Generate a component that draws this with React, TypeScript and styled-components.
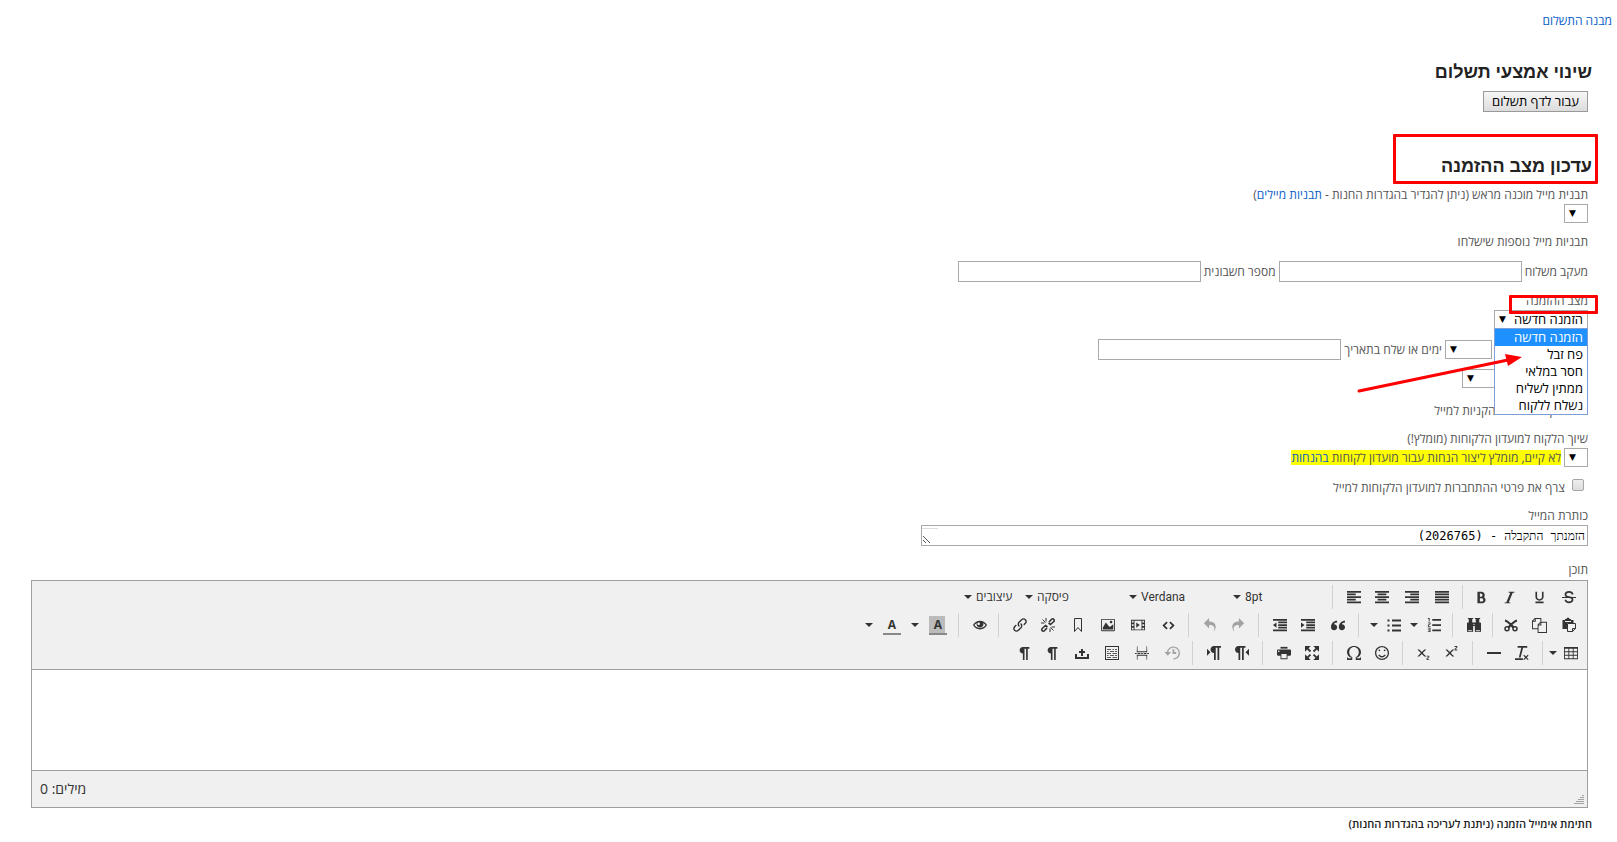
import React from 'react';
import styled, { createGlobalStyle } from 'styled-components';
import {
  ImParagraphLeft, ImParagraphCenter, ImParagraphRight, ImParagraphJustify, ImIndentIncrease, ImIndentDecrease,
  ImBold, ImUnderline, ImItalic, ImStrikethrough, ImOmega, ImPageBreak, ImSuperscript, ImSubscript, ImPilcrow,
  ImLtr, ImRtl, ImQuotesLeft, ImLink, ImImage, ImFilm, ImUndo2, ImRedo2, ImBinoculars, ImCopy, ImPrinter,
  ImSmile, ImEye, ImClearFormatting, ImTable2, ImListNumbered, ImHistory, ImEnlarge, ImEmbed,
} from 'react-icons/im';

const sans = '"Open Sans", "Liberation Sans", sans-serif';

const GlobalStyle = createGlobalStyle`
  body { margin: 0; background: #fff; }
  *, *::before, *::after { box-sizing: border-box; }
`;

const Page = styled.main`
  direction: rtl;
  padding: 13px 0 10px;
  font: 12px/16px ${sans};
  color: #555;
`;

const Link = styled.a`
  color: #0b5ec9;
  text-decoration: none;
`;

const Crumbs = styled.nav`
  padding: 0 5px;
`;

const Section = styled.section`
  padding: 0 25px 0 31px;
`;

const TitleBox = styled.div<{ $gap: number }>`
  position: relative;
  width: max-content;
  margin-top: ${p => p.$gap}px;
`;

const Title = styled.h2`
  margin: 0;
  font: 700 18px/24px "Liberation Sans", sans-serif;
  color: #222;
`;

const Mark = styled.span<{ $top: number; $right: number; $width: number; $height: number }>`
  position: absolute;
  z-index: 2;
  top: ${p => p.$top}px;
  right: ${p => p.$right}px;
  width: ${p => p.$width}px;
  height: ${p => p.$height}px;
  border: 3px solid #f00;
  border-radius: 1px;
  pointer-events: none;
`;

const Body = styled.div`
  padding-right: 4px;
`;

const PayButton = styled.button`
  display: block;
  height: 21px;
  margin-top: 7px;
  padding: 0 8px;
  border: 1px solid #999;
  border-radius: 0;
  background: linear-gradient(#f6f6f6, #dcdcdc);
  font: 13px/17px ${sans};
  color: #000;
`;

const Stack = styled.div<{ $gap: number; $top: number }>`
  display: flex;
  flex-direction: column;
  gap: ${p => p.$gap}px;
  padding-top: ${p => p.$top}px;
`;

const Field = styled.div`
  display: flex;
  flex-direction: column;
  align-items: flex-start;
  gap: 1px;
  position: relative;
`;

const Row = styled.div<{ $inset?: number }>`
  display: flex;
  align-items: center;
  gap: 3px;
  padding-right: ${p => p.$inset ?? 0}px;
`;

const TickRow = styled(Row)`
  height: 17px;
`;

const TextBox = styled.input`
  width: 243px;
  height: 21px;
  padding: 1px 3px;
  border: 1px solid #a9a9a9;
  background: #fff;
`;

const SelectShell = styled.span<{ $width: number }>`
  position: relative;
  display: inline-block;
  width: ${p => p.$width}px;
  height: 19px;
  &::after {
    content: '▼';
    position: absolute;
    left: 5px;
    top: 1px;
    font: 9px/17px "DejaVu Sans", sans-serif;
    color: #000;
    pointer-events: none;
  }
`;

const NativeSelect = styled.select`
  appearance: none;
  display: block;
  width: 100%;
  height: 100%;
  padding: 0 4px;
  border: 1px solid #a9a9a9;
  border-radius: 0;
  background: #fff;
  font: 13px/17px ${sans};
  color: #000;
`;

const Menu = styled.ul`
  position: absolute;
  z-index: 1;
  top: 100%;
  right: 0;
  width: 94px;
  margin: -1px 0 0;
  padding: 0;
  list-style: none;
  border: 1px solid #7b9fd6;
  background: #fff;
`;

const MenuItem = styled.li<{ $active?: boolean }>`
  height: 17px;
  padding: 0 4px;
  font: 13px/16px ${sans};
  white-space: nowrap;
  color: ${p => (p.$active ? '#fff' : '#000')};
  background: ${p => (p.$active ? '#1e90ff' : 'transparent')};
`;

const Pointer = styled.svg`
  position: absolute;
  z-index: 2;
  top: 59px;
  right: 60px;
  pointer-events: none;
`;

const Tick = styled.input`
  appearance: none;
  width: 12px;
  height: 12px;
  margin: 0 4px 5px;
  border: 1px solid #a6a6a6;
  border-radius: 2px;
  background: linear-gradient(#eee, #dcdcdc);
`;

const Notice = styled.span`
  line-height: 15px;
  background: #ff0;
`;

const SubjectShell = styled.span`
  position: relative;
  display: block;
  width: 667px;
  max-width: 100%;
  height: 21px;
`;

const Subject = styled.textarea`
  display: block;
  width: 100%;
  height: 100%;
  padding: 2px;
  border: 1px solid #a9a9a9;
  resize: none;
  overflow: hidden;
  font: 12px/16px "DejaVu Sans Mono", "Liberation Serif", monospace;
  color: #000;
`;

const SubjectGrip = styled.svg`
  position: absolute;
  left: 1px;
  top: 1px;
`;

const Content = styled.div`
  margin-top: 4px;
`;

const Editor = styled.div`
  margin-top: 2px;
  border: 1px solid #9e9e9e;
`;

const Toolbar = styled.div`
  padding: 2px 0;
  border-bottom: 1px solid #9e9e9e;
  background: #f0f0f0;
  color: #333;
`;

const ToolRow = styled.div`
  display: flex;
  height: 28px;
  align-items: center;
`;

const ToolGroup = styled.div<{ $bare?: boolean }>`
  display: flex;
  align-items: center;
  height: 24px;
  padding: 0 5px 0 8px;
  border-left: 1px solid ${p => (p.$bare ? 'transparent' : '#d2d2d2')};
  &:first-child { padding: 0 3px 0 5px; }
`;

const Tool = styled.button<{ $width?: number; $faded?: boolean }>`
  display: flex;
  align-items: center;
  justify-content: center;
  width: ${p => p.$width ?? 30}px;
  height: 24px;
  padding: 0;
  border: 0;
  background: none;
  color: inherit;
  font-size: 14px;
  opacity: ${p => (p.$faded ? 0.4 : 1)};
  &:last-child:not(:only-child) { width: ${p => p.$width ?? 26}px; }
`;

const Caret = styled.span`
  width: 0;
  height: 0;
  border: 4px solid transparent;
  border-top-color: #333;
  border-bottom: 0;
`;

const ListTool = styled.button<{ $width: number }>`
  display: flex;
  direction: ltr;
  align-items: center;
  gap: 4px;
  width: ${p => p.$width}px;
  height: 24px;
  padding: 0 4px;
  border: 0;
  background: none;
  font: 12px/16px Roboto, "Open Sans", sans-serif;
  color: #333;
`;

const Swatch = styled.span<{ $filled?: boolean }>`
  width: 18px;
  height: 19px;
  border-bottom: 2px solid #888;
  font: 700 12px/17px ${sans};
  text-align: center;
  background: linear-gradient(to right, ${p => (p.$filled ? '#bbb' : 'transparent')} 16px, transparent 16px);
`;

const Canvas = styled.div`
  height: 100px;
  background: #fff;
`;

const Status = styled.div`
  position: relative;
  display: flex;
  align-items: center;
  justify-content: flex-end;
  height: 37px;
  padding: 0 8px;
  border-top: 1px solid #9e9e9e;
  background: #f0f0f0;
  font: 14px/20px ${sans};
  color: #333;
`;

const Grip = styled.svg`
  position: absolute;
  right: 3px;
  bottom: 3px;
`;

const Footer = styled.p`
  margin: 8px 0 0;
  font: 600 11px/16px ${sans};
  color: #222;
`;

const Svg = ({ children }: { children: React.ReactNode }) => (
  <svg width="16" height="16" viewBox="0 0 16 16" fill="none" stroke="currentColor" aria-hidden="true">{children}</svg>
);

const Cut = () => (
  <Svg>
    <path d="M2 3.500C5 4 7 7 10.500 10.500M14 3.500C11 4 9 7 5.500 10.500" strokeWidth="2.200" />
    <circle cx="4" cy="11.700" r="2" strokeWidth="1.500" /><circle cx="12" cy="11.700" r="2" strokeWidth="1.500" />
  </Svg>
);
const Paste = () => (
  <Svg>
    <path d="M1.500 3H4V2h1.500a1.500 1.500 0 0 1 3 0H10v1h2.500v3H6v6H1.500z" fill="currentColor" stroke="none" />
    <path d="M4 4.500h6" stroke="#f0f0f0" />
    <path d="M6.500 6.500h8v5l-3 3h-5z" fill="#f0f0f0" />
    <path d="M14.500 11.500h-3v3" />
  </Svg>
);
const Bullets = () => (
  <Svg>
    <path d="M6 3.500h9M6 8.500h9M6 13.500h9" strokeWidth="2" />
    <path d="M1.500 3.500h2M1.500 8.500h2M1.500 13.500h2" strokeWidth="2" />
  </Svg>
);
const Bookmark = () => <Svg><path d="M4.500 1.500h7v13L8 10.500l-3.500 4z" /></Svg>;
const Unlink = () => (
  <Svg>
    <path d="M7.500 10L5.500 8.500 2.200 11.500a1.500 1.500 0 0 0 0 2.200 1.500 1.500 0 0 0 2.200 0L7 11M8.500 6l2 1.500 3.300-3a1.500 1.500 0 0 0 0-2.200 1.500 1.500 0 0 0-2.200 0L9 5" strokeWidth="1.600" />
    <path d="M6 1v3.500M1 6h3.500M2.500 2.500l3 3M10 15v-3.500M15 10h-3.500M13.500 13.500l-3-3" />
  </Svg>
);
const Upload = () => (
  <Svg>
    <path d="M2 9v4h12V9" strokeWidth="2" />
    <path d="M8 4v7" strokeWidth="2" /><path d="M5 7h6" strokeWidth="2" />
  </Svg>
);
const Blocks = () => (
  <Svg>
    <rect x="1.500" y="1.500" width="13" height="13" />
    <path d="M3 4.500h4M8.500 4.500h1.500M11 4.500h2M3 6.500h1.500M6 6.500h4M11 6.500h2M3 8.500h4M8.500 8.500h4.500M3 10.500h1.500M6 10.500h4M11 10.500h2M3 12.500h4M8.500 12.500h4.500" strokeWidth=".8" />
  </Svg>
);

const orderStates = ['הזמנה חדשה', 'פח זבל', 'חסר במלאי', 'ממתין לשליח', 'נשלח ללקוח'];

const Select = ({ width, label, id }: { width: number; label?: string; id?: string }) => (
  <SelectShell $width={width}>
    <NativeSelect id={id} aria-label={label} />
  </SelectShell>
);

export default function App() {
  return (
    <Page lang="he">
      <GlobalStyle />
      <Crumbs><Link href="#payment">מבנה התשלום</Link></Crumbs>
      <Section>
        <TitleBox $gap={31}><Title>שינוי אמצעי תשלום</Title></TitleBox>
        <Body><PayButton type="button">עבור לדף תשלום</PayButton></Body>
        <TitleBox $gap={42}>
          <Title>עדכון מצב ההזמנה</Title>
          <Mark $top={-20} $right={-6} $width={205} $height={50} />
        </TitleBox>
        <Body>
          <Stack $gap={11} $top={9}>
            <Field>
              <label htmlFor="template">
                תבנית מייל מוכנה מראש (ניתן להגדיר בהגדרות החנות - <Link href="#templates">תבניות מיילים</Link>)
              </label>
              <Select id="template" width={24} />
            </Field>
            <span>תבניות מייל נוספות שישלחו</span>
            <Row>
              <label htmlFor="tracking">מעקב משלוח</label>
              <TextBox id="tracking" />
              <label htmlFor="invoice">מספר חשבונית</label>
              <TextBox id="invoice" />
            </Row>
            <Field>
              <label htmlFor="state">מצב ההזמנה</label>
              <Mark $top={2} $right={-10} $width={89} $height={19} />
              <SelectShell $width={94}>
                <NativeSelect id="state">{orderStates.map(s => <option key={s}>{s}</option>)}</NativeSelect>
                <Menu role="listbox" aria-label="מצב ההזמנה">
                  {orderStates.map((s, i) => (
                    <MenuItem key={s} role="option" aria-selected={i === 0} $active={i === 0}>{s}</MenuItem>
                  ))}
                </Menu>
              </SelectShell>
              <Pointer width="172" height="44" viewBox="0 0 172 44" aria-hidden="true">
                <path d="M3 39L152 8" stroke="#f00" strokeWidth="3" strokeLinecap="round" />
                <path d="M149 2L166 5L152 14z" fill="#f00" />
              </Pointer>
            </Field>
          </Stack>
          <Stack $gap={9} $top={10}>
            <Row $inset={96}>
              <Select label="ימים" width={47} />
              <label htmlFor="date">ימים או שלח בתאריך</label>
              <TextBox id="date" />
            </Row>
            <Row><Select label="שעה" width={126} /></Row>
          </Stack>
          <Stack $gap={12} $top={14}>
            <TickRow>
              <Tick type="checkbox" id="cart" />
              <label htmlFor="cart">צרף את עגלת הקניות למייל</label>
            </TickRow>
            <Field>
              <label htmlFor="club">שיוך הלקוח למועדון הלקוחות (מומלץ!)</label>
              <Row>
                <Select id="club" width={24} />
                <Notice>לא קיים, מומלץ ליצור הנחות עבור מועדון לקוחות <Link href="#discounts">בהנחות</Link></Notice>
              </Row>
            </Field>
            <TickRow>
              <Tick type="checkbox" id="login" />
              <label htmlFor="login">צרף את פרטי ההתחברות למועדון הלקוחות למייל</label>
            </TickRow>
            <Field>
              <label htmlFor="subject">כותרת המייל</label>
              <SubjectShell>
                <Subject id="subject" rows={1} defaultValue="הזמנתך התקבלה - (2026765)" />
                <SubjectGrip width="16" height="19" viewBox="0 0 16 19" aria-hidden="true">
                  <path d="M0 2.500h16" stroke="#ddd" />
                  <path d="M1 10l7 7M1 14l3 3" stroke="#555" />
                </SubjectGrip>
              </SubjectShell>
            </Field>
            <Content>
              <span>תוכן</span>
              <Editor>
                <Toolbar role="toolbar">
                  <ToolRow>
                    <ToolGroup>
                      <Tool><ImStrikethrough /></Tool><Tool><ImUnderline size={13} /></Tool>
                      <Tool><ImItalic size={13} /></Tool><Tool><ImBold size={13} /></Tool>
                    </ToolGroup>
                    <ToolGroup>
                      <Tool><ImParagraphJustify /></Tool><Tool><ImParagraphRight /></Tool>
                      <Tool><ImParagraphCenter /></Tool><Tool><ImParagraphLeft /></Tool>
                    </ToolGroup>
                    <ToolGroup $bare>
                      <ListTool $width={98}><Caret />8pt</ListTool>
                      <ListTool $width={104}><Caret />Verdana</ListTool>
                      <ListTool $width={104}><Caret />פיסקה</ListTool>
                      <ListTool $width={61}><Caret />עיצובים</ListTool>
                    </ToolGroup>
                  </ToolRow>
                  <ToolRow>
                    <ToolGroup>
                      <Tool><Paste /></Tool><Tool><ImCopy size={15} /></Tool><Tool><Cut /></Tool>
                    </ToolGroup>
                    <ToolGroup><Tool $width={26}><ImBinoculars /></Tool></ToolGroup>
                    <ToolGroup>
                      <Tool $width={26}><ImListNumbered /></Tool><Tool $width={14}><Caret /></Tool>
                      <Tool $width={26}><Bullets /></Tool><Tool $width={14}><Caret /></Tool>
                    </ToolGroup>
                    <ToolGroup>
                      <Tool><ImQuotesLeft /></Tool><Tool><ImIndentIncrease /></Tool><Tool><ImIndentDecrease /></Tool>
                    </ToolGroup>
                    <ToolGroup><Tool $faded><ImRedo2 /></Tool><Tool $faded><ImUndo2 /></Tool></ToolGroup>
                    <ToolGroup>
                      <Tool><ImEmbed size={13} /></Tool><Tool><ImFilm /></Tool><Tool><ImImage /></Tool>
                      <Tool><Bookmark /></Tool><Tool><Unlink /></Tool><Tool><ImLink /></Tool>
                    </ToolGroup>
                    <ToolGroup><Tool $width={26}><ImEye /></Tool></ToolGroup>
                    <ToolGroup $bare>
                      <Tool><Swatch $filled>A</Swatch></Tool><Tool $width={16}><Caret /></Tool>
                      <Tool><Swatch>A</Swatch></Tool><Tool $width={16}><Caret /></Tool>
                    </ToolGroup>
                  </ToolRow>
                  <ToolRow>
                    <ToolGroup>
                      <Tool $width={26}><ImTable2 /></Tool><Tool $width={10}><Caret /></Tool>
                    </ToolGroup>
                    <ToolGroup>
                      <Tool><ImClearFormatting /></Tool>
                      <Tool><Svg><path d="M1 8h14" strokeWidth="2" /></Svg></Tool>
                    </ToolGroup>
                    <ToolGroup><Tool><ImSuperscript /></Tool><Tool><ImSubscript /></Tool></ToolGroup>
                    <ToolGroup><Tool><ImSmile /></Tool><Tool><ImOmega /></Tool></ToolGroup>
                    <ToolGroup><Tool><ImEnlarge /></Tool><Tool><ImPrinter /></Tool></ToolGroup>
                    <ToolGroup><Tool><ImRtl /></Tool><Tool><ImLtr /></Tool></ToolGroup>
                    <ToolGroup $bare>
                      <Tool $faded><ImHistory size={16} /></Tool><Tool><ImPageBreak /></Tool><Tool><Blocks /></Tool>
                      <Tool><Upload /></Tool><Tool><ImPilcrow size={13} /></Tool><Tool><ImPilcrow size={13} /></Tool>
                    </ToolGroup>
                  </ToolRow>
                </Toolbar>
                <Canvas contentEditable suppressContentEditableWarning role="textbox" aria-label="תוכן" />
                <Status>
                  <span>מילים: 0</span>
                  <Grip width="10" height="10" viewBox="0 0 10 10" aria-hidden="true">
                    <path d="M.5 9.500h9M2.500 7.500h7M4.500 5.500h5M6.500 3.500h3M8.500 1.500h1" stroke="#555" strokeDasharray="1 1" />
                  </Grip>
                </Status>
              </Editor>
            </Content>
          </Stack>
        </Body>
        <Footer>חתימת אימייל הזמנה (ניתנת לעריכה בהגדרות החנות)</Footer>
      </Section>
    </Page>
  );
}
